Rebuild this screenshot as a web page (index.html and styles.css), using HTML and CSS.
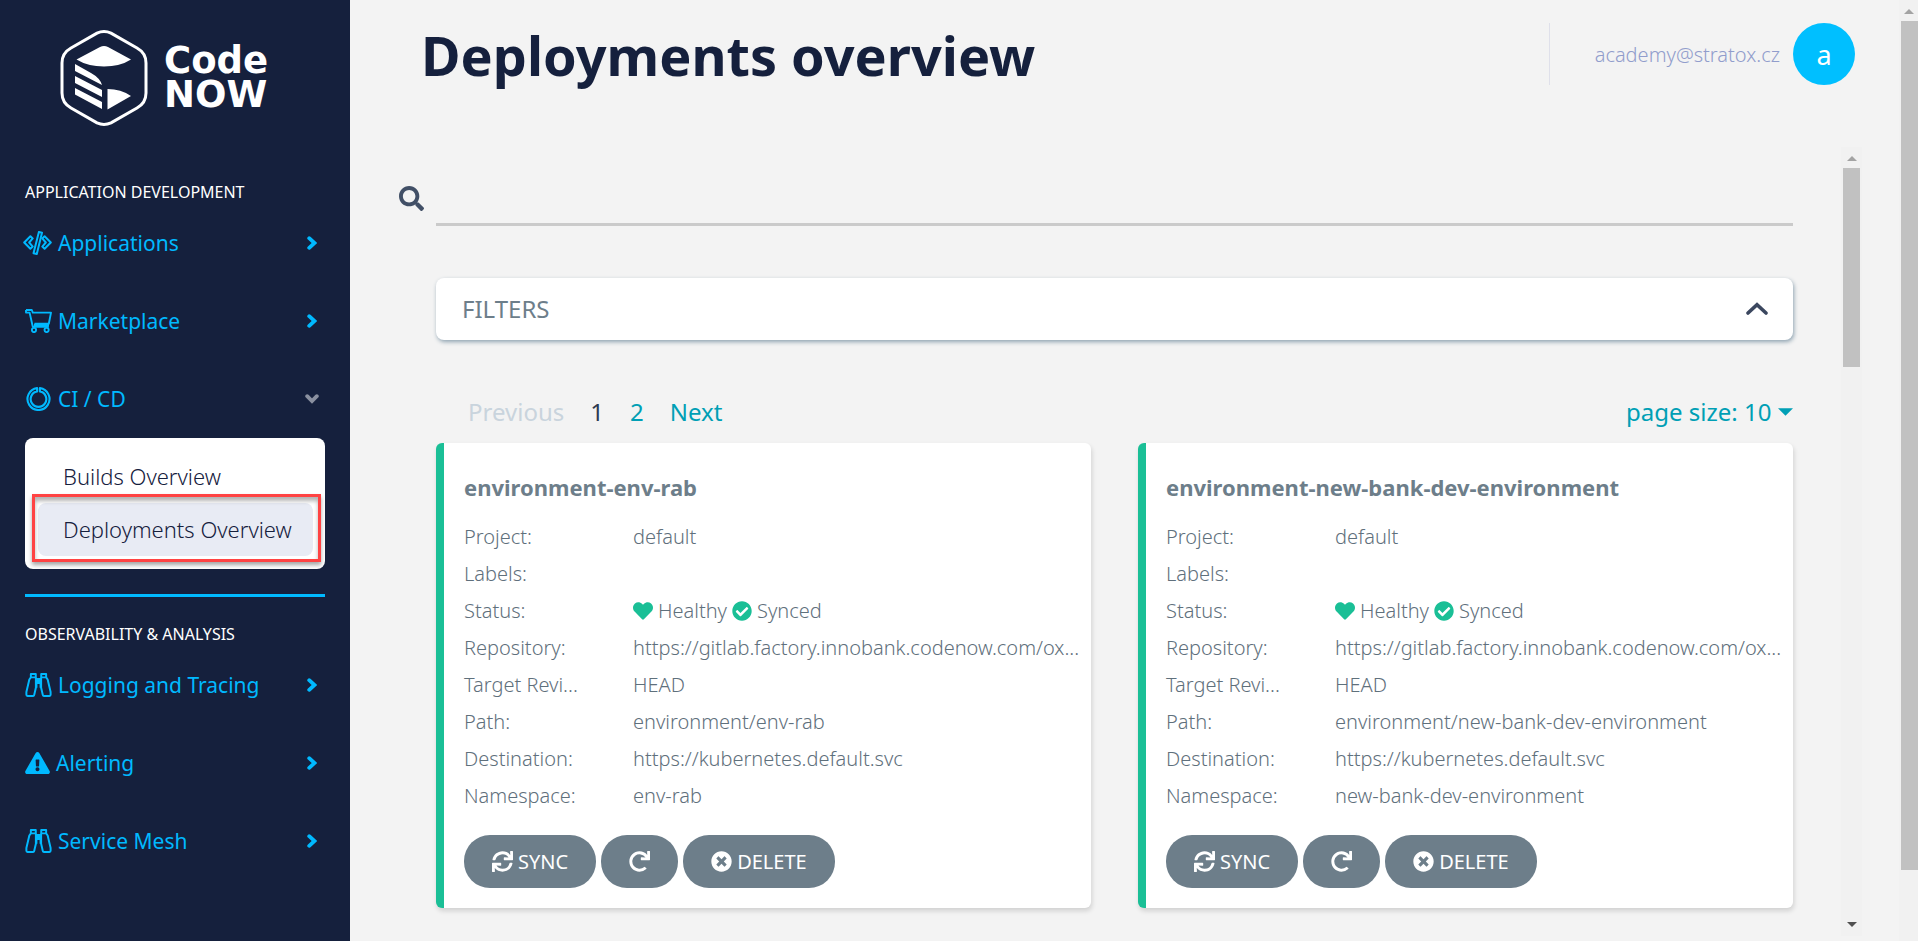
FILE: index.html
```html
<!DOCTYPE html>
<html lang="en">
<head>
<meta charset="utf-8">
<title>Deployments overview - CodeNOW</title>
<link rel="stylesheet" href="styles.css">
</head>
<body>
<svg class="sprite" aria-hidden="true">
  <symbol id="i-search" viewBox="0 0 512 512"><path d="M505 442.7L405.3 343c-4.5-4.5-10.6-7-17-7H372c27.6-35.3 44-79.7 44-128C416 93.1 322.9 0 208 0S0 93.1 0 208s93.1 208 208 208c48.3 0 92.7-16.4 128-44v16.3c0 6.4 2.5 12.5 7 17l99.7 99.7c9.4 9.4 24.6 9.4 33.9 0l28.3-28.3c9.4-9.4 9.4-24.6.1-34zM208 336c-70.7 0-128-57.2-128-128 0-70.7 57.2-128 128-128 70.7 0 128 57.2 128 128 0 70.7-57.2 128-128 128z"/></symbol>
  <symbol id="i-heart" viewBox="0 0 512 512"><path d="M462.3 62.6C407.5 15.9 326 24.3 275.7 76.2L256 96.5l-19.7-20.3C186.1 24.3 104.5 15.9 49.7 62.6c-62.8 53.6-66.1 149.8-9.9 207.9l193.5 199.8c12.5 12.9 32.8 12.9 45.3 0l193.5-199.8c56.3-58.1 53-154.3-9.8-207.9z"/></symbol>
  <symbol id="i-check" viewBox="0 0 512 512"><path d="M504 256c0 136.967-111.033 248-248 248S8 392.967 8 256 119.033 8 256 8s248 111.033 248 248zM227.314 387.314l184-184c6.248-6.248 6.248-16.379 0-22.627l-22.627-22.627c-6.248-6.249-16.379-6.249-22.628 0L216 308.118l-70.059-70.059c-6.248-6.248-16.379-6.248-22.628 0l-22.627 22.627c-6.248 6.248-6.248 16.379 0 22.627l104 104c6.249 6.249 16.379 6.249 22.628.001z"/></symbol>
  <symbol id="i-times" viewBox="0 0 512 512"><path d="M256 8C119 8 8 119 8 256s111 248 248 248 248-111 248-248S393 8 256 8zm121.6 313.1c4.7 4.7 4.7 12.3 0 17L338 377.6c-4.7 4.7-12.3 4.7-17 0L256 312l-65.1 65.6c-4.7 4.7-12.3 4.7-17 0L134.4 338c-4.7-4.7-4.7-12.3 0-17l65.6-65-65.6-65.1c-4.7-4.7-4.7-12.3 0-17l39.6-39.6c4.7-4.7 12.3-4.7 17 0l65 65.7 65.1-65.6c4.7-4.7 12.3-4.7 17 0l39.6 39.6c4.7 4.7 4.7 12.3 0 17L312 256l65.6 65.1z"/></symbol>
  <symbol id="i-redo" viewBox="0 0 512 512"><path d="M500.33 0h-47.41a12 12 0 0 0-12 12.57l4 82.76A247.42 247.42 0 0 0 256 8C119.34 8 7.9 119.53 8 256.19 8.1 393.07 119.1 504 256 504a247.1 247.1 0 0 0 166.18-63.91 12 12 0 0 0 .48-17.43l-34-34a12 12 0 0 0-16.38-.55A176 176 0 1 1 402.1 157.8l-101.53-4.87a12 12 0 0 0-12.57 12v47.41a12 12 0 0 0 12 12h200.33a12 12 0 0 0 12-12V12a12 12 0 0 0-12-12z"/></symbol>
  <symbol id="i-sync" viewBox="0 0 512 512"><path d="M440.65 12.57l4 82.77A247.16 247.16 0 0 0 255.83 8C134.73 8 33.91 94.92 12.29 209.82A12 12 0 0 0 24.09 224h49.05a12 12 0 0 0 11.67-9.26 175.91 175.91 0 0 1 317-56.94l-101.46-4.86a12 12 0 0 0-12.57 12v47.41a12 12 0 0 0 12 12H500a12 12 0 0 0 12-12V12a12 12 0 0 0-12-12h-47.37a12 12 0 0 0-11.98 12.57zM255.83 432a175.61 175.61 0 0 1-146-77.8l101.8 4.87a12 12 0 0 0 12.57-12v-47.4a12 12 0 0 0-12-12H12a12 12 0 0 0-12 12V500a12 12 0 0 0 12 12h47.35a12 12 0 0 0 12-12.6l-4.15-82.57A247.17 247.17 0 0 0 255.83 504c121.11 0 221.93-86.92 243.55-201.82a12 12 0 0 0-11.8-14.18h-49.05a12 12 0 0 0-11.67 9.26A175.86 175.86 0 0 1 255.83 432z"/></symbol>
  <symbol id="i-warn" viewBox="0 0 576 512"><path d="M569.517 440.013C587.975 472.007 564.806 512 527.94 512H48.054c-36.937 0-59.999-40.055-41.577-71.987L246.423 23.985c18.467-32.009 64.72-31.951 83.154 0l239.94 416.028zM288 354c-25.405 0-46 20.595-46 46s20.595 46 46 46 46-20.595 46-46-20.595-46-46-46zm-43.673-165.346l7.418 136c.347 6.364 5.609 11.346 11.982 11.346h48.546c6.373 0 11.635-4.982 11.982-11.346l7.418-136c.375-6.874-5.098-12.654-11.982-12.654h-63.383c-6.884 0-12.356 5.78-11.981 12.654z"/></symbol>
  <symbol id="i-code" viewBox="0 0 29 24"><g fill="none" stroke="currentColor" stroke-width="2" stroke-linejoin="round"><path d="M7.400 5.200 1.200 11.500l6.200 6.300 2.300-2.200-3.500-4.100 3.500-4.100z"/><path d="M21.600 5.200l6.200 6.300-6.200 6.300-2.300-2.200 3.500-4.100-3.500-4.100z"/><path d="M15.900 1l3.100.8-5.200 21.200-3.300-.8z"/></g></symbol>
  <symbol id="i-cart" viewBox="0 0 27 24"><g fill="none" stroke="currentColor" stroke-width="1.9" stroke-linejoin="round"><path d="M1 1h5.800l1 2.600H26l-2.200 11.200H9.400"/><path d="M1 1v2.600h3.600l3.200 14.200h16"/><path d="M9 16.200h15" stroke-width="2.600"/><circle cx="9" cy="21" r="2.100"/><circle cx="21.600" cy="21" r="2.100"/></g></symbol>
  <symbol id="i-ring" viewBox="0 0 24 24"><path d="M10.600 1.100A11 11 0 1 0 13.400 1.100L13.400 4.400A7.800 7.800 0 1 1 10.600 4.400Z" fill="none" stroke="currentColor" stroke-width="2.100" stroke-linejoin="round"/></symbol>
  <symbol id="i-bino" viewBox="0 0 24 22"><g fill="none" stroke="currentColor" stroke-width="1.800" stroke-linejoin="round"><path d="M5 1h4.500v3H5zM14.500 1H19v3h-4.500zM5 4 3.600 6 .9 17.500V20q0 1 1 1h5.200q1 0 1-1l1.500-6.500V4M19 4l1.400 2 2.700 11.500V20q0 1-1 1h-5.200q-1 0-1-1l-1.500-6.500V4"/></g><path d="M9 4.500h6v9h-2V10h-2v3.500H9z"/></symbol>
  <symbol id="i-right" viewBox="0 0 10 14"><path d="M2.200 2.200 7.500 7l-5.300 4.800" fill="none" stroke="currentColor" stroke-width="3.800" stroke-linecap="round"/></symbol>
  <symbol id="i-down" viewBox="0 0 14 10"><path d="M2.200 2.200 7 7l4.800-4.800" fill="none" stroke="currentColor" stroke-width="3.800" stroke-linecap="round"/></symbol>
  <symbol id="i-up" viewBox="0 0 22 13"><path d="M2 11 11 2.600 20 11" fill="none" stroke="currentColor" stroke-width="3.600" stroke-linecap="round" stroke-linejoin="miter"/></symbol>
  <symbol id="i-tri-up" viewBox="0 0 10 5"><path d="M5 0l5 5H0z"/></symbol>
  <symbol id="i-tri-down" viewBox="0 0 10 5"><path d="M0 0h10L5 5z"/></symbol>
</svg>

<div class="shell">
  <aside class="sidebar">
    <a class="logo" href="#">
      <svg class="logo-mark" viewBox="0 0 88 96" aria-hidden="true">
        <path d="M37 3.200Q44 0 51 3.200L77 18Q86 23 86 33V63Q86 73 77 78L51 92.800Q44 96 37 92.800L11 78Q2 73 2 63V33Q2 23 11 18Z" fill="none" stroke="#fff" stroke-width="3"/>
        <path d="M16.500 29.500 40 17q4-2 8 0l23 12.500Q60 36.500 44 36.500T16.500 29.500ZM15 34l16 9q9 5 11 12L15 41ZM15 46l27 14v7L15 53ZM15 58l27 14v7L15 64.500ZM47.500 59Q61 59 71 66L47.500 79.500Z" fill="#fff"/>
      </svg>
      <span class="logo-text"><span>Code</span><span>NOW</span></span>
    </a>
    <nav class="nav">
      <h2 class="nav-label">APPLICATION DEVELOPMENT</h2>
      <a class="nav-item" href="#"><svg class="nav-icon nav-icon-wide"><use href="#i-code"/></svg><span>Applications</span><svg class="arrow"><use href="#i-right"/></svg></a>
      <a class="nav-item" href="#"><svg class="nav-icon"><use href="#i-cart"/></svg><span>Marketplace</span><svg class="arrow"><use href="#i-right"/></svg></a>
      <a class="nav-item" href="#"><svg class="nav-icon"><use href="#i-ring"/></svg><span>CI / CD</span><svg class="arrow arrow-open"><use href="#i-down"/></svg></a>
      <div class="submenu">
        <a class="sub-item" href="#">Builds Overview</a>
        <a class="sub-item sub-active" href="#">Deployments Overview<span class="highlight"></span></a>
      </div>
      <hr class="rule">
      <h2 class="nav-label">OBSERVABILITY &amp; ANALYSIS</h2>
      <a class="nav-item" href="#"><svg class="nav-icon"><use href="#i-bino"/></svg><span>Logging and Tracing</span><svg class="arrow"><use href="#i-right"/></svg></a>
      <a class="nav-item" href="#"><svg class="nav-icon nav-icon-solid"><use href="#i-warn"/></svg><span>Alerting</span><svg class="arrow"><use href="#i-right"/></svg></a>
      <a class="nav-item" href="#"><svg class="nav-icon"><use href="#i-bino"/></svg><span>Service Mesh</span><svg class="arrow"><use href="#i-right"/></svg></a>
    </nav>
  </aside>

  <main class="main">
    <header class="header">
      <h1 class="title">Deployments overview</h1>
      <div class="user">
        <span class="email">academy@stratox.cz</span>
        <button class="avatar" type="button" aria-label="Account">a</button>
      </div>
    </header>
    <div class="body">
      <div class="content">
        <form class="search">
          <label for="search"><svg class="search-icon" role="img" aria-label="Search"><use href="#i-search"/></svg></label>
          <input id="search" class="search-input" type="text">
        </form>
        <button class="filters" type="button"><span>FILTERS</span><svg class="filters-arrow"><use href="#i-up"/></svg></button>
        <div class="pager">
          <nav class="pages">
            <a class="off" aria-disabled="true">Previous</a>
            <a class="current" href="#">1</a>
            <a href="#">2</a>
            <a href="#">Next</a>
          </nav>
          <div class="size">
            <select class="size-select" aria-label="Page size"><option>page size: 10</option><option>page size: 20</option><option>page size: 50</option></select>
            <svg class="size-caret"><use href="#i-tri-down"/></svg>
          </div>
        </div>
        <div class="cards">
          <article class="card">
            <h3 class="card-title">environment-env-rab</h3>
            <dl class="facts">
              <dt>Project:</dt><dd>default</dd>
              <dt>Labels:</dt><dd></dd>
              <dt>Status:</dt><dd class="status"><svg class="state"><use href="#i-heart"/></svg>Healthy<svg class="state"><use href="#i-check"/></svg>Synced</dd>
              <dt>Repository:</dt><dd>https://gitlab.factory.innobank.codenow.com/ox...</dd>
              <dt>Target Revi...</dt><dd>HEAD</dd>
              <dt>Path:</dt><dd>environment/env-rab</dd>
              <dt>Destination:</dt><dd>https://kubernetes.default.svc</dd>
              <dt>Namespace:</dt><dd>env-rab</dd>
            </dl>
            <div class="actions">
              <button class="btn" type="button"><svg class="btn-icon"><use href="#i-sync"/></svg>SYNC</button>
              <button class="btn" type="button" aria-label="Refresh"><svg class="btn-icon"><use href="#i-redo"/></svg></button>
              <button class="btn" type="button"><svg class="btn-icon"><use href="#i-times"/></svg>DELETE</button>
            </div>
          </article>
          <article class="card">
            <h3 class="card-title">environment-new-bank-dev-environment</h3>
            <dl class="facts">
              <dt>Project:</dt><dd>default</dd>
              <dt>Labels:</dt><dd></dd>
              <dt>Status:</dt><dd class="status"><svg class="state"><use href="#i-heart"/></svg>Healthy<svg class="state"><use href="#i-check"/></svg>Synced</dd>
              <dt>Repository:</dt><dd>https://gitlab.factory.innobank.codenow.com/ox...</dd>
              <dt>Target Revi...</dt><dd>HEAD</dd>
              <dt>Path:</dt><dd>environment/new-bank-dev-environment</dd>
              <dt>Destination:</dt><dd>https://kubernetes.default.svc</dd>
              <dt>Namespace:</dt><dd>new-bank-dev-environment</dd>
            </dl>
            <div class="actions">
              <button class="btn" type="button"><svg class="btn-icon"><use href="#i-sync"/></svg>SYNC</button>
              <button class="btn" type="button" aria-label="Refresh"><svg class="btn-icon"><use href="#i-redo"/></svg></button>
              <button class="btn" type="button"><svg class="btn-icon"><use href="#i-times"/></svg>DELETE</button>
            </div>
          </article>
        </div>
      </div>
      <div class="track track-inner" aria-hidden="true">
        <svg class="tri"><use href="#i-tri-up"/></svg>
        <div class="thumb thumb-inner"></div>
        <svg class="tri tri-dark"><use href="#i-tri-down"/></svg>
      </div>
    </div>
  </main>
  <div class="track track-page" aria-hidden="true">
    <svg class="tri"><use href="#i-tri-up"/></svg>
    <div class="thumb thumb-page"></div>
  </div>
</div>
</body>
</html>
```
FILE: styles.css
```css
* { box-sizing: border-box; }

body {
  margin: 0;
  background: #f3f3f3;
  color: #6d7e8a;
  font: 400 20px/37px "Noto Sans", "Open Sans", sans-serif;
}

a { color: inherit; text-decoration: none; }
svg { display: block; flex: none; fill: currentColor; }
button, input, select { font: inherit; color: inherit; border: 0; background: none; padding: 0; }
h1, h2, h3, dl, dd { margin: 0; }

.sprite { position: absolute; width: 0; height: 0; }
.shell { display: flex; min-height: 100vh; }

/* Sidebar */
.sidebar {
  flex: none;
  width: 350px;
  padding: 30px 25px 0;
  background: #15203d;
  color: #00b9ff;
}
.logo {
  display: flex;
  align-items: center;
  gap: 16px;
  margin: 0 0 54px 35px;
  color: #fff;
}
.logo-mark { width: 88px; height: 96px; }
.logo-text { display: grid; font: bold 37px/34px "DejaVu Sans", sans-serif; }

.nav-label {
  color: #fff;
  font-size: 16px;
  font-weight: 400;
  line-height: 24px;
}
.nav-item {
  display: flex;
  align-items: center;
  gap: 6px;
  height: 78px;
  font-size: 21px;
}
.nav-icon { width: 27px; height: 24px; }
.nav-icon-wide { width: 29px; margin-left: -2px; }
.nav-icon-solid { width: 25px; height: 22px; }
.arrow { width: 10px; height: 14px; margin: 0 8px 0 auto; }
.arrow-open { width: 14px; height: 10px; margin-right: 6px; color: #8a90a0; }

.submenu {
  padding: 12px 12px 13px 13px;
  border-radius: 8px;
  background: #fff;
  color: #15203d;
}
.sub-item {
  display: block;
  padding: 0 25px;
  border-radius: 8px;
  font-size: 22px;
  font-weight: 300;
  line-height: 53px;
  white-space: nowrap;
}
.sub-active { position: relative; background: #e8ebf4; }
.highlight {
  position: absolute;
  inset: -9px -8px -6px -6px;
  border: 3px solid #ff4343;
  box-shadow: 0 3px 4px rgba(0, 0, 0, .35), inset 0 4px 4px rgba(0, 0, 0, .3);
}
.rule { height: 3px; margin: 25px 0; border: 0; background: #00b9ff; }

/* Page header */
.main { flex: 1; min-width: 0; display: flex; flex-direction: column; padding: 0 37px 5px 0; }
.header { display: flex; justify-content: space-between; height: 147px; padding: 23px 7px 0 71px; }
.title { color: #15203d; font-size: 54px; font-weight: 700; line-height: 64px; }
.user {
  display: flex;
  align-items: center;
  gap: 13px;
  height: 62px;
  padding-left: 45px;
  border-left: 1px solid #dfe0ea;
}
.email { color: #919dcc; font-weight: 300; }
.avatar {
  width: 62px;
  height: 62px;
  border-radius: 50%;
  background: #00bfff;
  color: #fff;
  font-size: 27px;
}

/* Content panel */
.body { flex: 1; display: flex; }
.content { flex: 1; min-width: 0; padding: 31px 48px 28px 86px; }
.search { display: flex; gap: 12px; height: 48px; margin: 0 0 52px -37px; }
.search label { padding-top: 8px; color: #414f66; }
.search-icon { width: 25px; height: 25px; }
.search-input { flex: 1; border-bottom: 3px solid #cacaca; outline: 0; }

.filters {
  display: flex;
  align-items: center;
  justify-content: space-between;
  width: 100%;
  height: 62px;
  padding: 0 25px 2px 26px;
  border-radius: 8px;
  background: #fff;
  box-shadow: 1px 2px 4px #8fa3b1;
  font-size: 24px;
}
.filters-arrow { width: 22px; height: 13px; color: #3b475f; }

.pager {
  display: flex;
  justify-content: space-between;
  margin-top: 53px;
  padding: 0 0 13px 32px;
  color: #009fb5;
  font-size: 24px;
}
.pages { display: flex; gap: 26px; }
.off { color: #c9d4dd; }
.current { color: #2e3a52; }
.size { display: flex; align-items: center; gap: 6px; }
.size-select { appearance: none; }
.size-caret { width: 15px; height: 8px; }

.cards { display: grid; grid-template-columns: 1fr 1fr; gap: 47px; }
.card {
  min-width: 0;
  padding: 26px 6px 20px 20px;
  border-left: 8px solid #1abf96;
  border-radius: 6px;
  background: #fff;
  box-shadow: 1px 3px 5px rgba(0, 0, 0, .14);
}
.card-title { margin-bottom: 12px; font-size: 22px; font-weight: 700; line-height: 37px; }
.facts {
  display: grid;
  grid-template-columns: 169px minmax(0, 1fr);
  grid-auto-rows: 37px;
  color: #5f707c;
  font-weight: 300;
  white-space: nowrap;
}
.facts dd { overflow: hidden; text-overflow: ellipsis; }
.status { display: flex; align-items: center; gap: 5px; }
.state { width: 20px; height: 20px; color: #1abf96; }
.actions { display: flex; gap: 5px; margin-top: 21px; }
.btn {
  display: flex;
  align-items: center;
  gap: 5px;
  height: 53px;
  padding: 0 28px;
  border-radius: 26px;
  background: #6d7e8a;
  color: #fff;
}
.btn-icon { width: 21px; height: 21px; }

/* Scroll tracks */
.track { flex: none; display: flex; flex-direction: column; align-items: center; background: #f1f1f1; }
.track-inner { width: 21px; padding: 9px 0; }
.track-page { width: 19px; padding: 9px 0; align-items: flex-end; }
.tri { width: 10px; height: 5px; color: #a3a3a3; }
.track-page .tri { margin-right: 4px; }
.tri-dark { margin-top: auto; color: #505050; }
.thumb { width: 17px; margin-top: 7px; background: #c1c1c1; }
.thumb-inner { height: 199px; }
.thumb-page { height: 849px; }
```
